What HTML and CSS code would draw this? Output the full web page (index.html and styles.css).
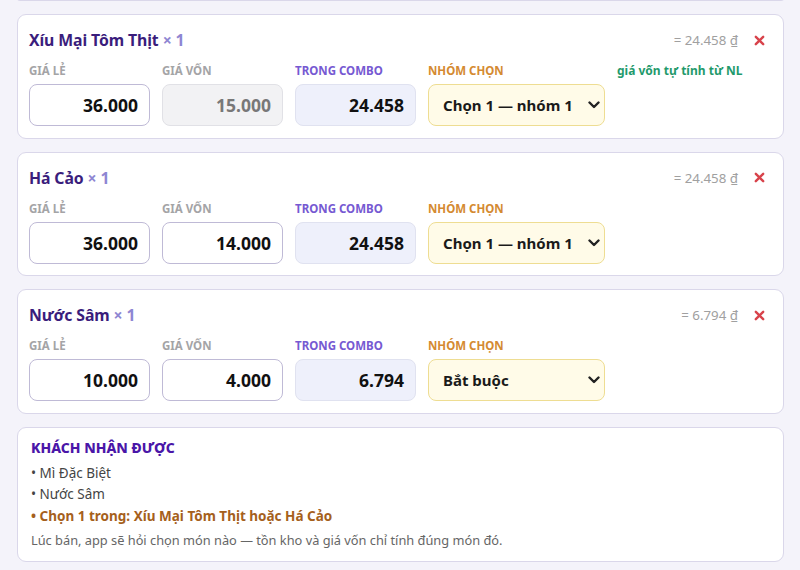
FILE: index.html
```html
<!DOCTYPE html>
<html lang="vi">
<head>
<meta charset="utf-8">
<link rel="stylesheet" href="styles.css">
</head>
<body>
<div class="page">
  <div class="card prev"></div>

  <div class="card item">
    <div class="head">
      <div class="title">Xíu Mại Tôm Thịt <span class="qty">× 1</span></div>
      <div class="sum">= 24.458 ₫</div>
      <div class="del"><svg viewBox="0 0 12 12" width="11" height="11"><path d="M2 2 L10 10 M10 2 L2 10" stroke="#d8434b" stroke-width="2.6" stroke-linecap="round"/></svg></div>
    </div>
    <div class="row">
      <div class="field">
        <div class="lbl">GIÁ LẺ</div>
        <div class="box">36.000</div>
      </div>
      <div class="field">
        <div class="lbl">GIÁ VỐN</div>
        <div class="box off">15.000</div>
      </div>
      <div class="field">
        <div class="lbl combo">TRONG COMBO</div>
        <div class="box cb">24.458</div>
      </div>
      <div class="field wide">
        <div class="lbl grp">NHÓM CHỌN</div>
        <div class="sel"><span>Chọn 1 — nhóm 1</span><svg class="chev" viewBox="0 0 12 8" width="12" height="8"><path d="M1.5 1.5 L6 6 L10.5 1.5" fill="none" stroke="#222" stroke-width="2.4" stroke-linecap="round" stroke-linejoin="round"/></svg></div>
      </div>
      <div class="note">giá vốn tự tính từ NL</div>
    </div>
  </div>

  <div class="card item">
    <div class="head">
      <div class="title">Há Cảo <span class="qty">× 1</span></div>
      <div class="sum">= 24.458 ₫</div>
      <div class="del"><svg viewBox="0 0 12 12" width="11" height="11"><path d="M2 2 L10 10 M10 2 L2 10" stroke="#d8434b" stroke-width="2.6" stroke-linecap="round"/></svg></div>
    </div>
    <div class="row">
      <div class="field">
        <div class="lbl">GIÁ LẺ</div>
        <div class="box">36.000</div>
      </div>
      <div class="field">
        <div class="lbl">GIÁ VỐN</div>
        <div class="box">14.000</div>
      </div>
      <div class="field">
        <div class="lbl combo">TRONG COMBO</div>
        <div class="box cb">24.458</div>
      </div>
      <div class="field wide">
        <div class="lbl grp">NHÓM CHỌN</div>
        <div class="sel"><span>Chọn 1 — nhóm 1</span><svg class="chev" viewBox="0 0 12 8" width="12" height="8"><path d="M1.5 1.5 L6 6 L10.5 1.5" fill="none" stroke="#222" stroke-width="2.4" stroke-linecap="round" stroke-linejoin="round"/></svg></div>
      </div>
    </div>
  </div>

  <div class="card item">
    <div class="head">
      <div class="title">Nước Sâm <span class="qty">× 1</span></div>
      <div class="sum">= 6.794 ₫</div>
      <div class="del"><svg viewBox="0 0 12 12" width="11" height="11"><path d="M2 2 L10 10 M10 2 L2 10" stroke="#d8434b" stroke-width="2.6" stroke-linecap="round"/></svg></div>
    </div>
    <div class="row">
      <div class="field">
        <div class="lbl">GIÁ LẺ</div>
        <div class="box">10.000</div>
      </div>
      <div class="field">
        <div class="lbl">GIÁ VỐN</div>
        <div class="box">4.000</div>
      </div>
      <div class="field">
        <div class="lbl combo">TRONG COMBO</div>
        <div class="box cb">6.794</div>
      </div>
      <div class="field wide">
        <div class="lbl grp">NHÓM CHỌN</div>
        <div class="sel"><span>Bắt buộc</span><svg class="chev" viewBox="0 0 12 8" width="12" height="8"><path d="M1.5 1.5 L6 6 L10.5 1.5" fill="none" stroke="#222" stroke-width="2.4" stroke-linecap="round" stroke-linejoin="round"/></svg></div>
      </div>
    </div>
  </div>

  <div class="card summary">
    <div class="stitle">KHÁCH NHẬN ĐƯỢC</div>
    <ul class="list">
      <li>• Mì Đặc Biệt</li>
      <li>• Nước Sâm</li>
      <li class="pick">• Chọn 1 trong: Xíu Mại Tôm Thịt hoặc Há Cảo</li>
    </ul>
    <div class="foot">Lúc bán, app sẽ hỏi chọn món nào — tồn kho và giá vốn chỉ tính đúng món đó.</div>
  </div>
</div>
</body>
</html>
```

FILE: styles.css
```css
* { box-sizing: border-box; }
html, body { margin: 0; padding: 0; }
body {
  background: #f4f3fa;
  font-family: "Noto Sans", "Open Sans", sans-serif;
  color: #222;
  height: 570px;
  overflow: hidden;
}
.page {
  display: flex;
  flex-direction: column;
  gap: 13px;
  padding: 0 16px 0 17px;
}
.card {
  background: #fff;
  border: 1px solid #dad7ea;
  border-radius: 9px;
}
.prev {
  height: 3px;
  border-top: none;
  border-radius: 0 0 9px 9px;
  margin-top: -2px;
}
.item {
  height: 124.5px;
  padding: 13px 12px 0 11px;
}
.head {
  display: flex;
  align-items: center;
  height: 24px;
}
.title {
  font-weight: 700;
  font-size: 15.8px;
  color: #3a1d7c;
  flex: 1;
  letter-spacing: -0.1px;
}
.qty { color: #8e86d2; }
.sum {
  font-size: 13.3px;
  color: #a0a0a0;
}
.del {
  width: 24px;
  margin-left: 9px;
  display: flex;
  justify-content: center;
  align-items: center;
}
.del svg { display: block; }
.row {
  display: flex;
  gap: 12px;
  margin-top: 12px;
}
.field {
  display: flex;
  flex-direction: column;
  gap: 6px;
  width: 121px;
}
.field.wide { width: 177px; }
.lbl {
  font-size: 11.5px;
  font-weight: 700;
  color: #a4a4a6;
  line-height: 14px;
  height: 14px;
}
.lbl.combo { color: #7659d2; }
.lbl.grp { color: #d48a31; }
.box {
  height: 42px;
  border: 1px solid #bfbad6;
  border-radius: 8px;
  background: #fff;
  text-align: right;
  padding: 0 11px;
  font-size: 17.5px;
  font-weight: 700;
  line-height: 40px;
  color: #111;
}
.box.off {
  background: #f2f2f4;
  border-color: #e1e1e6;
  color: #787878;
}
.box.cb {
  background: #eef0fb;
  border-color: #e0e2f0;
}
.sel {
  height: 42px;
  border: 1px solid #eedd92;
  border-radius: 8px;
  background: #fffbe8;
  display: flex;
  align-items: center;
  justify-content: space-between;
  padding: 0 4px 0 14px;
  font-size: 15px;
  font-weight: 700;
  color: #1a1a1a;
}
.chev { display: block; }
.note {
  font-size: 12px;
  font-weight: 700;
  color: #1f9a6c;
  line-height: 14px;
}
.summary {
  height: 135px;
  padding: 9px 14px 0 13px;
  background: #fff;
}
.stitle {
  font-size: 14px;
  font-weight: 800;
  color: #4a16a8;
  line-height: 22px;
}
.list {
  list-style: none;
  margin: 4px 0 0 0;
  padding: 0;
}
.list li {
  font-size: 13.5px;
  line-height: 21.5px;
  color: #444;
}
.list li.pick {
  color: #a5601c;
  font-weight: 700;
}
.foot {
  margin-top: 4px;
  font-size: 12.8px;
  color: #666;
  line-height: 18px;
}
```
